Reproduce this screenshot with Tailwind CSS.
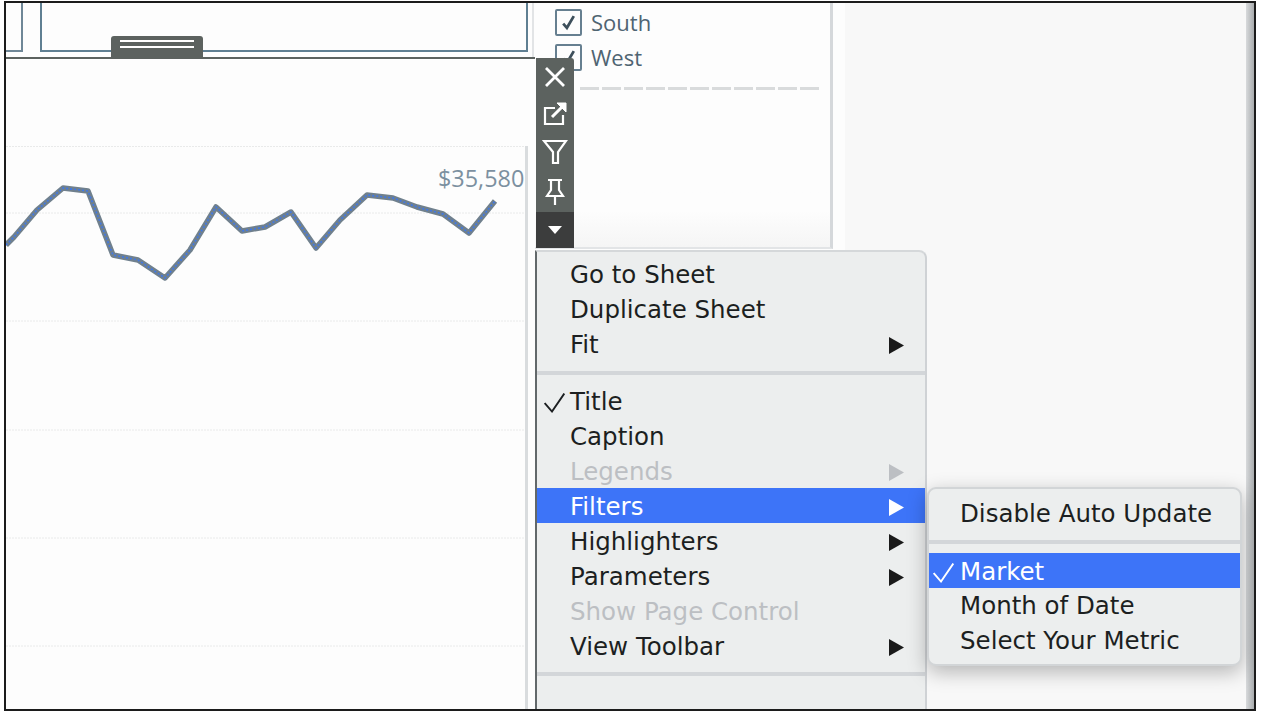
<!DOCTYPE html>
<html lang="en">
<head>
    <meta charset="UTF-8">
    <meta name="viewport" content="width=device-width, initial-scale=1.0">
    <title>Dashboard sheet menu</title>
    <script src="https://cdn.jsdelivr.net/npm/@tailwindcss/browser@4"></script>
</head>
<body class="bg-white overflow-hidden">
    <div class="relative ml-[4px] mt-[1px] w-[1252px] h-[710px] border-2 border-[#1c1c1c] bg-[#fdfdfd] flex overflow-hidden">

        <!-- Sheet column -->
        <div class="w-[529px] h-full flex flex-col shrink-0">
            <div class="relative h-[54px] shrink-0">
                <div class="absolute left-0 top-0 w-[17px] h-[49px] border-r-2 border-b-2 border-[#6f8797]"></div>
                <div class="absolute left-[34px] top-0 w-[488px] h-[49px] border-x-2 border-b-2 border-[#5f7f92]"></div>
                <div class="absolute left-[526px] top-0 w-[2px] h-full bg-[#e2e4e6]"></div>
                <div class="absolute left-[105px] top-[33px] w-[92px] h-[22px] bg-[#5c625f] rounded-t-[3px] flex flex-col items-center pt-[4px] gap-[4px]">
                    <div class="w-[74px] h-[2px] bg-white"></div>
                    <div class="w-[74px] h-[2px] bg-white"></div>
                </div>
            </div>
            <div class="h-[2px] bg-[#5c625f] shrink-0 w-[530px]"></div>
            <div class="relative flex-1">
                <svg class="absolute left-0 top-0" width="529" height="651" viewBox="6 59 529 651" fill="none">
                    <path d="M6 146.5H526M6 213H526M6 321H526M6 430H526M6 538H526M6 646H526" stroke="#e9eaea" stroke-width="1" stroke-dasharray="2 1"/>
                    <path d="M526.5 146V710" stroke="#d9dcde" stroke-width="3"/>
                    <path d="M6 245L14 237L37 210L63 188L88 191L113 255L138 260L165 278L190 250L216 207L242 231L265 227L291 212L316 248L340 220L367 195L393 198L417 207L443 214L469 233L495 201" stroke="#70808d" stroke-width="5.5" stroke-linejoin="round"/>
                    <path d="M6 245L14 237L37 210L63 188L88 191L113 255L138 260L165 278L190 250L216 207L242 231L265 227L291 212L316 248L340 220L367 195L393 198L417 207L443 214L469 233L495 201" stroke="#3f78e8" stroke-width="1.6" stroke-linejoin="round" stroke-dasharray="2 2"/>
                </svg>
                <span class="absolute left-[432px] top-[104px] text-[23.4px] leading-[30px] text-[#7c90a0] font-['Open_Sans',sans-serif]">$35,580</span>
            </div>
        </div>

        <!-- Filter column -->
        <div class="w-[298px] h-[246px] shrink-0 border-r-[3px] border-b-2 border-r-[#d5d8db] border-b-[#e2e4e6] flex flex-col pl-[20px] font-['Open_Sans',sans-serif] text-[22px] text-[#4f6472] bg-gradient-to-b from-[#fdfdfd] from-[85%] to-[#f5f5f5]">
            <div class="flex items-center gap-[9px] h-[35px] mt-[2px]">
                <div class="w-[27px] h-[27px] border-2 border-[#667f90] rounded-[2px] flex items-center justify-center">
                    <svg width="17" height="17" viewBox="0 0 16 16" fill="none"><path d="M3 9L6.5 13L13 2" stroke="#3d4f5b" stroke-width="2.6"/></svg>
                </div>
                <span>South</span>
            </div>
            <div class="flex items-center gap-[9px] h-[35px]">
                <div class="w-[27px] h-[27px] border-2 border-[#667f90] rounded-[2px] flex items-center justify-center">
                    <svg width="17" height="17" viewBox="0 0 16 16" fill="none"><path d="M3 9L6.5 13L13 2" stroke="#3d4f5b" stroke-width="2.6"/></svg>
                </div>
                <span>West</span>
            </div>
            <svg class="mt-[12px] ml-[25px]" width="242" height="3" viewBox="0 0 242 3" fill="none"><path d="M0 1.5H242" stroke="#d9dbdc" stroke-width="3" stroke-dasharray="19 3"/></svg>
        </div>
        <div class="flex-1 h-full flex">
            <div class="w-[12px] bg-[#fdfdfd]"></div>
            <div class="flex-1 bg-[#f8f8f8]"></div>
            <div class="w-[8px] bg-gradient-to-r from-[#d8dadc] to-[#a9acae]"></div>
        </div>

        <!-- Floating sheet toolbar -->
        <div class="absolute left-[530px] top-[55px] w-[38px] h-[190px] bg-[#5c625f] flex flex-col items-center rounded-tr-[3px]">
            <div class="h-[37px] w-full flex items-center justify-center">
                <svg width="24" height="24" viewBox="0 0 24 24" fill="none" stroke="#fff" stroke-width="2.8"><path d="M3 3L21 21M21 3L3 21"/></svg>
            </div>
            <div class="h-[37px] w-full flex items-center justify-center">
                <svg width="26" height="26" viewBox="0 0 26 26" fill="none" stroke="#fff" stroke-width="2.2"><path d="M13 7H3V23H21V14"/><path d="M10 16L21 5" stroke-width="3"/><path d="M15 2H24V11Z" fill="#fff" stroke-width="1"/></svg>
            </div>
            <div class="h-[40px] w-full flex items-center justify-center">
                <svg width="26" height="26" viewBox="0 0 26 26" fill="none" stroke="#fff" stroke-width="2.2"><path d="M2 2H24L16 13V24H11V13Z"/></svg>
            </div>
            <div class="h-[40px] w-full flex items-center justify-center">
                <svg width="20" height="28" viewBox="0 0 20 28" fill="none" stroke="#fff" stroke-width="2.2"><path d="M3 2H17M6 2V12L2 18H18L14 12V2M10 18V27"/></svg>
            </div>
            <div class="h-[36px] w-full bg-[#3c3d3d] flex items-center justify-center">
                <svg width="14" height="8" viewBox="0 0 14 8" fill="#fff"><path d="M0 0H14L7 8Z"/></svg>
            </div>
        </div>

        <!-- Sheet context menu -->
        <div class="absolute left-[529px] top-[247px] w-[392px] h-[464px] bg-[#eceeee] border-l-2 border-l-[#62686a] border-r-2 border-r-[#cfd2d5] border-t-2 border-t-[#d5d8da] rounded-tr-[8px] pt-[6px] font-['DejaVu_Sans',sans-serif] text-[24.5px] text-[#1c1f21]">
            <div class="flex items-center h-[35px] pl-[33px] pr-[21px]"><span class="flex-1">Go to Sheet</span></div>
            <div class="flex items-center h-[35px] pl-[33px] pr-[21px]"><span class="flex-1">Duplicate Sheet</span></div>
            <div class="flex items-center h-[35px] pl-[33px] pr-[21px]"><span class="flex-1">Fit</span><svg width="15" height="17" viewBox="0 0 15 17" fill="#1a1a1a"><path d="M0 0L15 8.5L0 17Z"/></svg></div>
            <div class="h-[4px] bg-[#d3d6d9] mt-[8px] mb-[8px]"></div>
            <div class="relative flex items-center h-[35px] pt-[3px] pl-[33px] pr-[21px]">
                <svg class="absolute left-[7px] top-[10px]" width="21" height="20" viewBox="0 0 21 20" fill="none" stroke="#1c1f21" stroke-width="1.9"><path d="M0.7 10L8 18.5L20.3 0.5"/></svg>
                <span class="flex-1">Title</span>
            </div>
            <div class="flex items-center h-[35px] pt-[3px] pl-[33px] pr-[21px]"><span class="flex-1">Caption</span></div>
            <div class="flex items-center h-[35px] pt-[3px] pl-[33px] pr-[21px] text-[#bcbfc3]"><span class="flex-1">Legends</span><svg width="15" height="17" viewBox="0 0 15 17" fill="#bcbfc3"><path d="M0 0L15 8.5L0 17Z"/></svg></div>
            <div class="flex items-center h-[35px] pt-[3px] pl-[33px] pr-[21px] bg-[#3d74f8] text-white"><span class="flex-1">Filters</span><svg width="15" height="17" viewBox="0 0 15 17" fill="#fff"><path d="M0 0L15 8.5L0 17Z"/></svg></div>
            <div class="flex items-center h-[35px] pt-[3px] pl-[33px] pr-[21px]"><span class="flex-1">Highlighters</span><svg width="15" height="17" viewBox="0 0 15 17" fill="#1a1a1a"><path d="M0 0L15 8.5L0 17Z"/></svg></div>
            <div class="flex items-center h-[35px] pt-[3px] pl-[33px] pr-[21px]"><span class="flex-1">Parameters</span><svg width="15" height="17" viewBox="0 0 15 17" fill="#1a1a1a"><path d="M0 0L15 8.5L0 17Z"/></svg></div>
            <div class="flex items-center h-[35px] pt-[3px] pl-[33px] pr-[21px] text-[#bcbfc3]"><span class="flex-1">Show Page Control</span></div>
            <div class="flex items-center h-[35px] pt-[3px] pl-[33px] pr-[21px]"><span class="flex-1">View Toolbar</span><svg width="15" height="17" viewBox="0 0 15 17" fill="#1a1a1a"><path d="M0 0L15 8.5L0 17Z"/></svg></div>
            <div class="h-[4px] bg-[#d3d6d9] mt-[9px]"></div>
        </div>

        <!-- Filters submenu -->
        <div class="absolute left-[921px] top-[484px] w-[315px] h-[179px] bg-[#eceeee] border-2 border-[#d2d5d7] rounded-[9px] shadow-[0_6px_20px_rgba(0,0,0,0.28)] pt-[8px] font-['DejaVu_Sans',sans-serif] text-[24.5px] text-[#1c1f21] overflow-hidden">
            <div class="flex items-center h-[35px] pl-[31px]">Disable Auto Update</div>
            <div class="h-[4px] bg-[#d3d6d9] mt-[8px] mb-[9px]"></div>
            <div class="relative flex items-center h-[35px] pt-[3px] pl-[31px] bg-[#3d74f8] text-white">
                <svg class="absolute left-[4px] top-[10px]" width="21" height="20" viewBox="0 0 21 20" fill="none" stroke="#fff" stroke-width="1.9"><path d="M0.7 10L8 18.5L20.3 0.5"/></svg>
                Market
            </div>
            <div class="flex items-center h-[35px] pt-[2px] pl-[31px]">Month of Date</div>
            <div class="flex items-center h-[35px] pt-[2px] pl-[31px]">Select Your Metric</div>
        </div>
    </div>
</body>
</html>
